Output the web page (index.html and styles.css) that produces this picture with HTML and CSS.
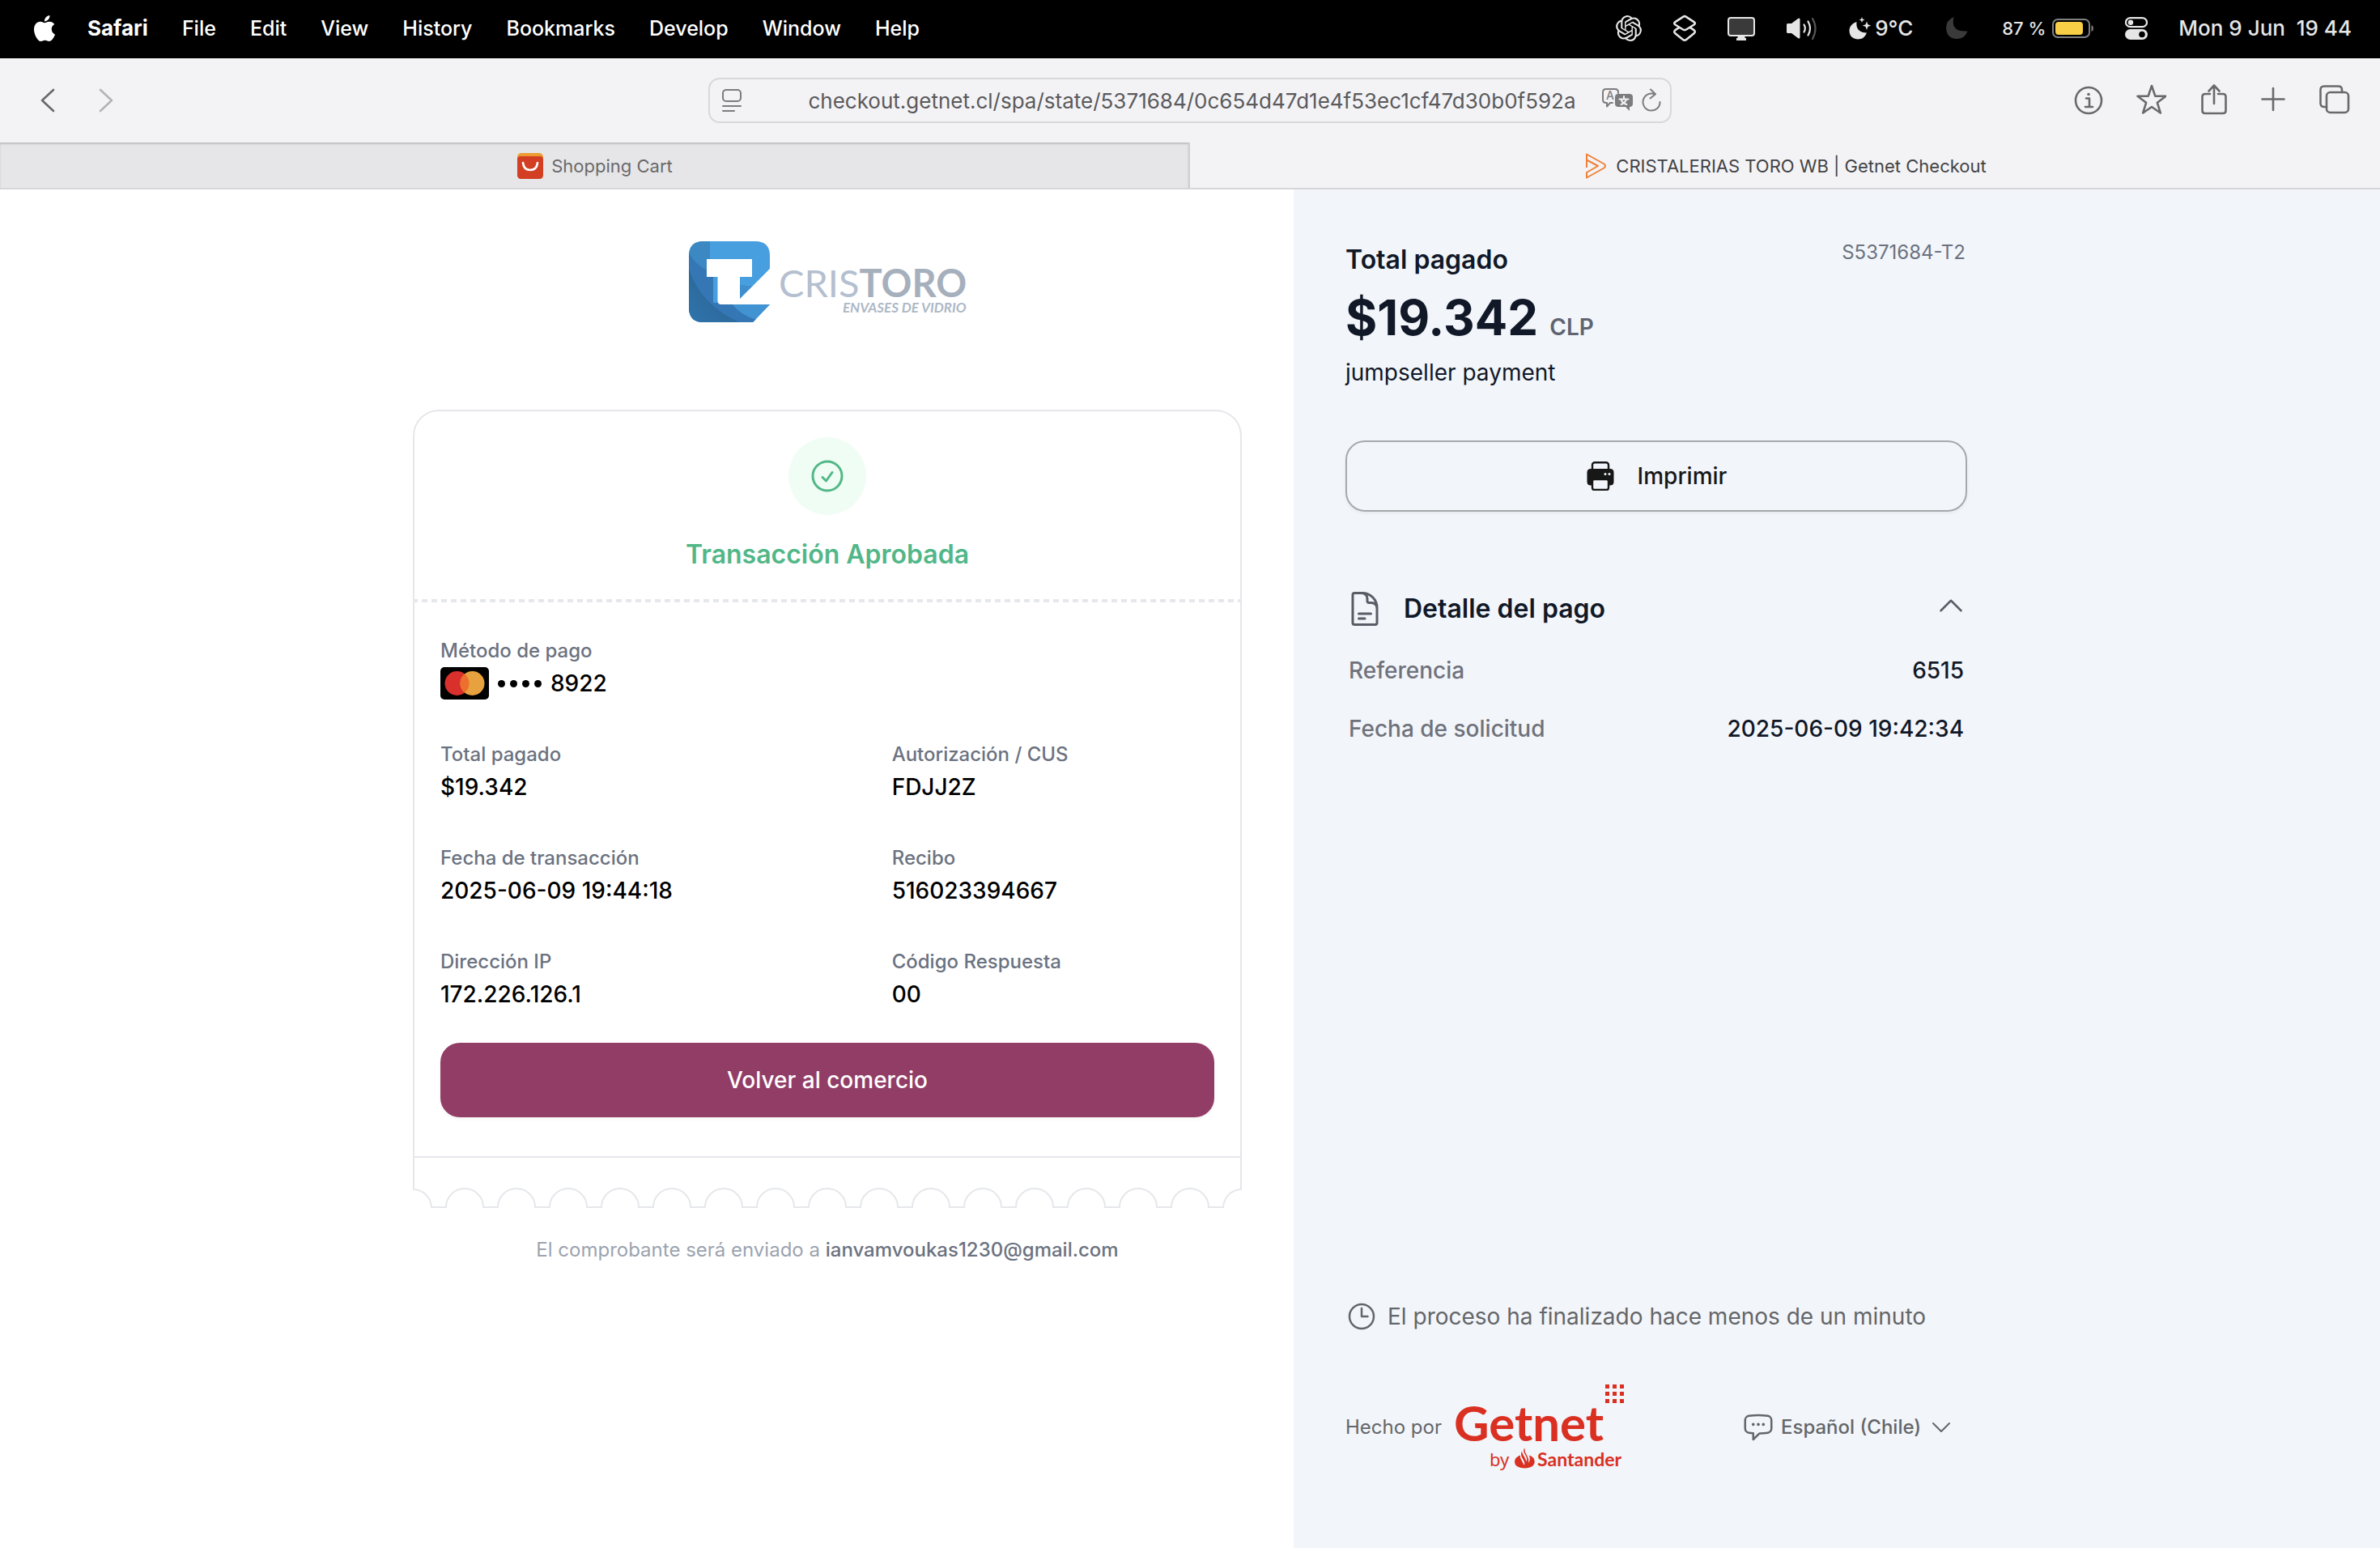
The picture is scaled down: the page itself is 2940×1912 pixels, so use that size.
FILE: index.html
```html
<!DOCTYPE html>
<html lang="es">
<head>
<meta charset="utf-8">
<title>CRISTALERIAS TORO WB | Getnet Checkout</title>
<link rel="stylesheet" href="styles.css">
</head>
<body>
<header class="menubar">
  <nav class="menus" aria-label="Menu bar">
    <button class="menu apple" aria-label="Apple"><svg width="32" height="32" viewBox="0 0 24 24" fill="currentColor"><path d="M12.152 6.896c-.948 0-2.415-1.078-3.96-1.04-2.04.027-3.91 1.183-4.961 3.014-2.117 3.675-.546 9.103 1.519 12.09 1.013 1.454 2.208 3.09 3.792 3.039 1.52-.065 2.09-.987 3.935-.987 1.831 0 2.35.987 3.96.948 1.637-.026 2.676-1.48 3.676-2.948 1.156-1.688 1.636-3.325 1.662-3.415-.039-.013-3.182-1.221-3.22-4.857-.026-3.04 2.48-4.494 2.597-4.559-1.429-2.09-3.623-2.324-4.39-2.376-2-.156-3.675 1.09-4.61 1.09zM15.53 3.83c.843-1.012 1.4-2.427 1.245-3.83-1.207.052-2.662.805-3.532 1.818-.78.896-1.454 2.338-1.273 3.714 1.338.104 2.715-.688 3.559-1.701"/></svg></button>
    <button class="menu app">Safari</button>
    <button class="menu">File</button>
    <button class="menu">Edit</button>
    <button class="menu">View</button>
    <button class="menu">History</button>
    <button class="menu">Bookmarks</button>
    <button class="menu">Develop</button>
    <button class="menu">Window</button>
    <button class="menu">Help</button>
  </nav>
  <div class="status">
    <svg width="32" height="32" viewBox="0 0 24 24" fill="currentColor"><path d="M22.2819 9.8211a5.9847 5.9847 0 0 0-.5157-4.9108 6.0462 6.0462 0 0 0-6.5098-2.9A6.0651 6.0651 0 0 0 4.9807 4.1818a5.9847 5.9847 0 0 0-3.9977 2.9 6.0462 6.0462 0 0 0 .7427 7.0966 5.98 5.98 0 0 0 .511 4.9107 6.051 6.051 0 0 0 6.5146 2.9001A5.9847 5.9847 0 0 0 13.2599 24a6.0557 6.0557 0 0 0 5.7718-4.2058 5.9894 5.9894 0 0 0 3.9977-2.9001 6.0557 6.0557 0 0 0-.7475-7.0729zm-9.022 12.6081a4.4755 4.4755 0 0 1-2.8764-1.0408l.1419-.0804 4.7783-2.7582a.7948.7948 0 0 0 .3927-.6813v-6.7369l2.02 1.1686a.071.071 0 0 1 .038.052v5.5826a4.504 4.504 0 0 1-4.4945 4.4944zm-9.6607-4.1254a4.4708 4.4708 0 0 1-.5346-3.0137l.142.0852 4.783 2.7582a.7712.7712 0 0 0 .7806 0l5.8428-3.3685v2.3324a.0804.0804 0 0 1-.0332.0615L9.74 19.9502a4.4992 4.4992 0 0 1-6.1408-1.6464zM2.3408 7.8956a4.485 4.485 0 0 1 2.3655-1.9728V11.6a.7664.7664 0 0 0 .3879.6765l5.8144 3.3543-2.0201 1.1685a.0757.0757 0 0 1-.071 0l-4.8303-2.7865A4.504 4.504 0 0 1 2.3408 7.872zm16.5963 3.8558L13.1038 8.364 15.1192 7.2a.0757.0757 0 0 1 .071 0l4.8303 2.7913a4.4944 4.4944 0 0 1-.6765 8.1042v-5.6772a.79.79 0 0 0-.407-.667zm2.0107-3.0231l-.142-.0852-4.7735-2.7818a.7759.7759 0 0 0-.7854 0L9.409 9.2297V6.8974a.0662.0662 0 0 1 .0284-.0615l4.8303-2.7866a4.4992 4.4992 0 0 1 6.6802 4.66zM8.3065 12.863l-2.02-1.1638a.0804.0804 0 0 1-.038-.0567V6.0742a4.4992 4.4992 0 0 1 7.3757-3.4537l-.142.0805L8.704 5.459a.7948.7948 0 0 0-.3927.6813zm1.0976-2.3654l2.602-1.4998 2.6069 1.4998v2.9994l-2.5974 1.4997-2.6067-1.4997Z"/></svg>
    <svg width="30" height="34" viewBox="0 0 30 34" fill="none" stroke="currentColor" stroke-width="2.6" stroke-linejoin="round"><path d="M13 2.800q2-1.400 4 0l9.600 6.300q2.400 1.700 0 3.400L17 18.500q-2 1.200-4 0l-9.600-6q-2.400-1.700 0-3.400Z"/><path d="M8.500 15.800 3.400 19.200q-2.400 2 0 4L13 31q2 1.400 4 0l9.600-7.800q2.400-2 0-4l-5.100-3.400"/></svg>
    <svg width="34" height="30" viewBox="0 0 34 30"><rect x="1" y="2" width="32" height="22" rx="3" fill="#3a3a3a" stroke="currentColor" stroke-width="2"/><path d="M12.500 24h9v3h1.500v3h-12v-3h1.500Z" fill="currentColor"/></svg>
    <svg width="40" height="30" viewBox="0 0 40 30" fill="none" stroke="currentColor" stroke-width="2.200" stroke-linecap="round"><path d="M1 10.500q0-1.500 1.500-1.500H7l8-6q2.500-1.500 2.500 1v22q0 2.500-2.500 1l-8-6H2.500Q1 21 1 19.500Z" fill="currentColor" stroke="none"/><path d="M22.500 10.500q2.600 4.500 0 9M27.500 6.500q5 8.500 0 17"/><path d="M33 3q7 12 0 25" stroke="#555"/></svg>
    <span class="weather"><svg width="28" height="30" viewBox="0 0 28 30" fill="currentColor"><path d="M9.500 7Q8 20 22 20.500q-3 8-11 8Q1 28 .500 18 .500 10 9.500 7Z"/><path d="M16 1l.9 2.600 2.600.9-2.600.9L16 8l-.9-2.600-2.600-.9 2.600-.9ZM22 6.500l1.400 3.800 3.900 1.300-3.900 1.300L22 17l-1.400-4.100-3.900-1.300 3.900-1.300Z"/></svg>9°C</span>
    <svg class="focus" width="34" height="30" viewBox="0 0 34 30" fill="currentColor"><path d="M12.500 1Q8 20 29.500 18.500 26 28 16 28 4 27.500 3 15 3 5 12.500 1Z"/></svg>
    <span class="battery">87 %<svg width="52" height="24" viewBox="0 0 52 24"><rect x="1" y="1" width="45" height="22" rx="6" fill="none" stroke="#808080" stroke-width="2"/><rect x="4" y="4" width="34" height="16" rx="4" fill="#f7ce46"/><path d="M48.500 8q2.500 1 2.500 4t-2.500 4Z" fill="#808080"/></svg></span>
    <svg width="28" height="28" viewBox="0 0 28 28"><rect x="1" y="1.200" width="26" height="11" rx="5.500" fill="none" stroke="currentColor" stroke-width="2.200"/><circle cx="7" cy="6.700" r="3.200" fill="currentColor"/><rect y="15" width="28" height="13" rx="6.500" fill="currentColor"/><circle cx="21" cy="21.500" r="3.800" fill="#000"/></svg>
    <span class="clock">Mon 9 Jun&nbsp; 19 44</span>
  </div>
</header>

<div class="toolbar">
  <div class="history">
    <button class="tool" aria-label="Back"><svg width="40" height="40" viewBox="0 0 40 40"><path d="M27 7 13 20l14 13"/></svg></button>
    <button class="tool off" aria-label="Forward"><svg width="40" height="40" viewBox="0 0 40 40"><path d="M13 7l14 13-14 13"/></svg></button>
  </div>
  <div class="address">
    <button class="tool mini" aria-label="Reader"><svg width="24" height="30" viewBox="0 0 24 30"><rect x="1" y="2" width="22" height="14" rx="4"/><path d="M1 22h22M1 28h14"/></svg></button>
    <input class="url" aria-label="Address" value="checkout.getnet.cl/spa/state/5371684/0c654d47d1e4f53ec1cf47d30b0f592a">
    <div class="page-tools">
      <button class="tool mini" aria-label="Translate"><svg width="40" height="30" viewBox="0 0 40 30"><path d="M13 18h-3l-4 4.500V18H5q-4 0-4-4V5q0-4 4-4h11q4 0 4 4v1"/><path class="solid" d="M20 7h14q4 0 4 4v8q0 4-4 4v5l-5-5h-9q-4 0-4-4v-8q0-4 4-4Z"/><text class="glyph-a" x="5" y="14">A</text><path class="knock" d="M27 10v3M21.500 13.500h11M23.500 20q5.500-2 6.500-6.500M24 15q2 4 6.500 5"/></svg></button>
      <button class="tool mini" aria-label="Reload"><svg width="26" height="30" viewBox="0 0 26 30"><path d="M23.500 17A10.500 10.500 0 1 1 17 7.400M12 1.500l6 5.800-6.500 5.200"/></svg></button>
    </div>
  </div>
  <div class="actions">
    <button class="tool" aria-label="Info"><svg width="40" height="40" viewBox="0 0 40 40"><circle cx="20" cy="20" r="16"/><path d="M17 17.500h4V28M16 28h9"/><circle class="solid" cx="20" cy="12.500" r="1.800"/></svg></button>
    <button class="tool" aria-label="Bookmark"><svg width="40" height="40" viewBox="-2 1 40 40"><path d="M20 3l4.300 12.600 13.200.2-10.600 8 3.900 12.700L20 29l-10.800 7.500 3.900-12.700-10.600-8 13.200-.2Z"/></svg></button>
    <button class="tool" aria-label="Share"><svg width="40" height="40" viewBox="-3 1 40 40"><path d="M15 13h-6q-3.500 0-3.500 3.500v17Q5.500 37 9 37h22q3.500 0 3.500-3.500v-17Q34.500 13 31 13h-6M20 25V3M13.500 9.500 20 2.500l6.500 7"/></svg></button>
    <button class="tool" aria-label="New tab"><svg width="40" height="40" viewBox="0 1 40 40"><path d="M20 6v27M6.500 19.500h27"/></svg></button>
    <button class="tool" aria-label="Tab overview"><svg width="40" height="40" viewBox="0 1 40 40"><path d="M10 29H7q-4.500 0-4.500-4.500V8Q2.500 3.500 7 3.500h17.500Q29 3.500 29 8v3"/><rect x="10" y="11" width="27" height="25" rx="4.500"/></svg></button>
  </div>
</div>

<nav class="tabs" aria-label="Tabs">
  <button class="tab"><svg width="32" height="32" viewBox="0 0 32 32"><rect width="32" height="32" rx="5" fill="#ee9c32"/><path d="M0 8q0-4 4-4h24q4 0 4 4v19q0 5-5 5H5q-5 0-5-5Z" fill="#d23f22"/><path d="M7 12q1 9 9 9t9-9" fill="none" stroke="#fff" stroke-width="2.600" stroke-linecap="round"/></svg>Shopping Cart</button>
  <button class="tab current"><svg width="28" height="32" viewBox="0 0 28 32" fill="none" stroke="#f08037" stroke-width="2" stroke-linejoin="round"><path d="M2 18V1.500l21.500 12q3 2.500 0 5L2 30.500V24l14-8L2 8.500"/></svg>CRISTALERIAS TORO WB | Getnet Checkout</button>
</nav>

<main class="checkout">
  <section class="receipt-side">
    <div class="receipt-column">
      <svg class="merchant" width="342" height="100" viewBox="0 0 342 100" role="img" aria-label="Cristoro">
        <defs>
          <clipPath id="badge"><path d="M18 0H82Q100 0 100 18V34L79 57v21h21L79 100H18Q0 100 0 82V18Q0 0 18 0Z"/></clipPath>
          <linearGradient id="deep" x1="0" y1="1" x2="1" y2="0"><stop offset="0" stop-color="#2f74ac"/><stop offset="1" stop-color="#2b5f8c"/></linearGradient>
        </defs>
        <g clip-path="url(#badge)">
          <path fill="#479fdf" d="M0 0h100v100H0Z"/>
          <path fill="#3c88c2" d="M0 0h26v60H0Z"/>
          <path fill="#3f8fce" d="M62 53q10 3 20 2L62 74Z"/>
          <path fill="#4193d2" d="M40 76h60v24H60Z"/>
          <path fill="#3577b4" d="M0 15Q12 34 30 38v38h22q12 16 32 21v3H0Z"/>
          <path fill="url(#deep)" d="M0 34q14 44 62 66H0Z"/>
        </g>
        <path fill="#fff" d="M22 22h56v22H63v27l37-37v44H40q-4.500 0-4.500-4.500V44H22Z"/>
        <text class="brand" x="111" y="69">CRIS<tspan class="brand-bold">TORO</tspan></text>
        <text class="brand-sub" x="190" y="88">ENVASES DE VIDRIO</text>
      </svg>

      <article class="receipt">
        <div class="result">
          <span class="result-badge"><svg class="line-icon" width="48" height="48" viewBox="0 0 24 24"><path d="M9 12.750 11.250 15 15 9.750M21 12a9 9 0 1 1-18 0 9 9 0 0 1 18 0Z"/></svg></span>
          <h1 class="result-title">Transacción Aprobada</h1>
        </div>
        <div class="receipt-body">
          <dl class="facts">
            <div class="fact wide"><dt>Método de pago</dt><dd class="card-number"><svg width="60" height="40" viewBox="0 0 60 40"><rect width="60" height="40" rx="5"/><circle cx="20.500" cy="20" r="15" fill="#d9302c"/><circle cx="39.500" cy="20" r="15" fill="#e8a13f"/><path d="M30 8.400a15 15 0 0 1 0 23.200 15 15 0 0 1 0-23.200Z" fill="#ec6f2d"/></svg><span class="dots"><i></i><i></i><i></i><i></i></span>8922</dd></div>
            <div class="fact"><dt>Total pagado</dt><dd>$19.342</dd></div>
            <div class="fact"><dt>Autorización / CUS</dt><dd>FDJJ2Z</dd></div>
            <div class="fact"><dt>Fecha de transacción</dt><dd>2025-06-09 19:44:18</dd></div>
            <div class="fact"><dt>Recibo</dt><dd>516023394667</dd></div>
            <div class="fact"><dt>Dirección IP</dt><dd>172.226.126.1</dd></div>
            <div class="fact"><dt>Código Respuesta</dt><dd>00</dd></div>
          </dl>
          <button class="return">Volver al comercio</button>
        </div>
      </article>
      <svg class="stub" viewBox="0 0 1024 64" aria-hidden="true"><path d="M0 1h1024M1 0v41a23 23 0 0 1 22 22h18a23 23 0 0 1 46 0h18a23 23 0 0 1 46 0h18a23 23 0 0 1 46 0h18a23 23 0 0 1 46 0h18a23 23 0 0 1 46 0h18a23 23 0 0 1 46 0h18a23 23 0 0 1 46 0h18a23 23 0 0 1 46 0h18a23 23 0 0 1 46 0h18a23 23 0 0 1 46 0h18a23 23 0 0 1 46 0h18a23 23 0 0 1 46 0h18a23 23 0 0 1 46 0h18a23 23 0 0 1 46 0h18a23 23 0 0 1 46 0h18a23 23 0 0 1 22-22V0"/></svg>
      <p class="mail-note">El comprobante será enviado a <strong>ianvamvoukas1230@gmail.com</strong></p>
    </div>
  </section>

  <aside class="summary-side">
    <div class="summary">
      <div class="summary-head">
        <h2 class="heading">Total pagado</h2>
        <span class="session">S5371684-T2</span>
      </div>
      <p class="amount">$19.342 <span class="currency">CLP</span></p>
      <p class="concept">jumpseller payment</p>
      <button class="print"><svg width="36" height="36" viewBox="0 0 36 36"><rect x="8" y="1.200" width="20" height="12" rx="3" fill="none" stroke="#171717" stroke-width="2.400"/><path d="M6 9h24q4.500 0 4.500 4.500V25q0 4.500-4.500 4.500H6Q1.500 29.500 1.500 25V13.500Q1.500 9 6 9Z" fill="#171717"/><rect x="8" y="22" width="20" height="13" rx="2.500" fill="#f2f5fa" stroke="#171717" stroke-width="2.400"/><circle cx="24" cy="15.500" r="1.500" fill="#f2f5fa"/><circle cx="29" cy="15.500" r="1.500" fill="#f2f5fa"/></svg>Imprimir</button>

      <button class="detail-toggle" aria-expanded="true">
        <svg class="line-icon" width="48" height="48" viewBox="0 0 24 24"><path d="M19.500 14.250v-2.625a3.375 3.375 0 0 0-3.375-3.375h-1.500A1.125 1.125 0 0 1 13.500 7.125v-1.500a3.375 3.375 0 0 0-3.375-3.375H8.250m0 12.750h7.500m-7.500 3H12M10.500 2.250H5.625c-.621 0-1.125.504-1.125 1.125v17.250c0 .621.504 1.125 1.125 1.125h12.750c.621 0 1.125-.504 1.125-1.125V11.250a9 9 0 0 0-9-9Z"/></svg>
        <span class="heading">Detalle del pago</span>
        <svg class="line-icon chevron" width="40" height="40" viewBox="0 0 24 24"><path d="m4.500 15.750 7.500-7.500 7.500 7.500"/></svg>
      </button>
      <dl class="detail">
        <div class="detail-row"><dt>Referencia</dt><dd>6515</dd></div>
        <div class="detail-row"><dt>Fecha de solicitud</dt><dd>2025-06-09 19:42:34</dd></div>
      </dl>

      <footer class="foot">
        <p class="elapsed"><svg class="line-icon" width="40" height="40" viewBox="0 0 24 24"><path d="M12 6v6h4.500m4.500 0a9 9 0 1 1-18 0 9 9 0 0 1 18 0Z"/></svg>El proceso ha finalizado hace menos de un minuto</p>
        <div class="made-by">
          <span>Hecho por</span>
          <svg class="getnet" width="208" height="106" viewBox="0 0 208 106" role="img" aria-label="Getnet by Santander">
            <path d="M184 0h5v5h-5ZM193 0h5v5h-5ZM202 0h5v5h-5ZM184 9h5v5h-5ZM193 9h5v5h-5ZM202 9h5v5h-5ZM184 18h5v5h-5ZM193 18h5v5h-5ZM202 18h5v5h-5Z"/>
            <text class="getnet-name" x="-3" y="70">Getnet</text>
            <text class="getnet-by" x="41" y="101">by</text>
            <path d="M84.500 78.500q-.5 4 2 8 3.500 5.500 2.700 10.500l1-2q1.500-3.500-.5-7.500 7 2 7 7.500 0 8-12.500 8.500Q72 103 72 95.500q0-5.500 7-8-.5 3 1.500 6l3.500 6.500q1-3-1-6.500l-2-3.500q-2-4 0-7.500.5 3 2.500 6l3.500 7q1-3.500-1-7l-2-3.500q-2-4 .5-6.500Z"/>
            <text class="getnet-bank" x="100" y="101">Santander</text>
          </svg>
          <label class="language"><svg class="line-icon" width="40" height="40" viewBox="0 0 24 24"><path d="M8.625 9.750a.375.375 0 1 1-.750 0 .375.375 0 0 1 .750 0Zm0 0H8.250m4.125 0a.375.375 0 1 1-.750 0 .375.375 0 0 1 .750 0Zm0 0H12m4.125 0a.375.375 0 1 1-.750 0 .375.375 0 0 1 .750 0Zm0 0h-.375m-13.500 3.010c0 1.600 1.123 2.994 2.707 3.227 1.087.160 2.185.283 3.293.369V21l4.184-4.183a1.140 1.140 0 0 1 .778-.332 48.294 48.294 0 0 0 5.830-.498c1.585-.233 2.708-1.626 2.708-3.228V6.741c0-1.602-1.123-2.995-2.707-3.228A48.394 48.394 0 0 0 12 3c-2.392 0-4.744.175-7.043.513C3.373 3.746 2.250 5.140 2.250 6.741v6.018Z"/></svg><select aria-label="Idioma"><option>Español (Chile)</option></select><svg class="line-icon" width="32" height="32" viewBox="0 0 24 24"><path d="m19.500 8.250-7.500 7.500-7.500-7.500"/></svg></label>
        </div>
      </footer>
    </div>
  </aside>
</main>
</body>
</html>
```
FILE: styles.css
```css
* {
  box-sizing: border-box;
}

body {
  margin: 0;
  min-height: 100vh;
  display: flex;
  flex-direction: column;
  font-family: Inter, "Liberation Sans", sans-serif;
  font-size: 28px;
  line-height: 40px;
  color: #111827;
  background: #fff;
}

h1, h2, p, dl, dd {
  margin: 0;
}

button, input, select {
  margin: 0;
  padding: 0;
  border: 0;
  background: none;
  color: inherit;
  font: inherit;
}

svg {
  display: block;
  flex: none;
}

/* System menu bar */
.menubar {
  display: flex;
  justify-content: space-between;
  align-items: center;
  height: 72px;
  padding: 0 35px 2px 39px;
  background: #000;
  color: #fff;
  font-size: 25px;
  font-weight: 500;
}

.menus {
  display: flex;
  align-items: center;
  gap: 42px;
}

.menu {
  white-space: nowrap;
}

.menu.app {
  font-size: 26px;
  font-weight: 700;
}

.apple {
  margin-right: -5px;
}

.status {
  display: flex;
  align-items: center;
  gap: 38px;
  color: #e6e6e6;
}

.weather, .battery {
  display: flex;
  align-items: center;
  gap: 4px;
}

.weather, .clock {
  font-size: 26px;
}

.battery {
  gap: 8px;
  font-size: 22px;
}

.focus {
  color: #3a3a3a;
}

/* Browser toolbar */
.toolbar {
  display: grid;
  grid-template-columns: 1fr 1190px 1fr;
  align-items: center;
  height: 104px;
  padding: 0 36px;
  background: #f3f3f6;
}

.history, .actions {
  display: flex;
  gap: 32px;
}

.history {
  padding-left: 3px;
}

.actions {
  justify-content: flex-end;
  gap: 36px;
}

.tool {
  color: #69696b;
}

.tool.off {
  color: #b4b4b6;
}

.tool svg {
  fill: none;
  stroke: currentColor;
  stroke-width: 2.6;
  stroke-linecap: round;
  stroke-linejoin: round;
}

.tool.mini {
  color: #7c7c7e;
}

.tool.mini svg {
  stroke-width: 2;
}

.tool .solid {
  fill: currentColor;
  stroke: none;
}

.tool .knock {
  stroke: #f3f3f6;
}

.tool .glyph-a {
  fill: currentColor;
  stroke: none;
  font-size: 14px;
  font-weight: 500;
}

.address {
  display: grid;
  grid-template-columns: 88px 1fr 88px;
  align-items: center;
  height: 56px;
  padding: 0 10px 0 15px;
  border: 2px solid #d8d8da;
  border-radius: 14px;
}

.url {
  width: 100%;
  height: 40px;
  padding-top: 2px;
  font-size: 26px;
  text-align: center;
  color: #5a5a5c;
}

.page-tools {
  display: flex;
  justify-content: flex-end;
  gap: 8px;
}

.tabs {
  display: grid;
  grid-template-columns: 1fr 1fr;
  height: 58px;
  border-bottom: 2px solid #d5d6d9;
  background: #f3f3f6;
}

.tab {
  display: flex;
  justify-content: center;
  align-items: center;
  gap: 10px;
  padding: 2px 0 0 2px;
  border-right: 2px solid #cfcfd1;
  background: #e6e6e8;
  box-shadow: inset 0 2px 2px #bfbfc1;
  color: #69696b;
  font-size: 22px;
}

.tab.current {
  border: 0;
  background: none;
  box-shadow: none;
  color: #434345;
}

/* Checkout page */
.checkout {
  flex: 1;
  display: grid;
  grid-template-columns: calc(50% + 128px) 1fr;
}

.receipt-side {
  display: flex;
  justify-content: flex-end;
  padding: 64px 64px 64px 0;
}

.receipt-column {
  flex: 0 1 1024px;
}

.merchant {
  margin: 0 auto 108px;
  overflow: visible;
}

.brand, .brand-sub {
  font-family: Lato, sans-serif;
  font-size: 47px;
  fill: #b4bfd0;
}

.brand-bold {
  font-weight: 700;
  fill: #a6b0bd;
}

.brand-sub {
  font-size: 17px;
  font-weight: 700;
  font-style: italic;
  fill: #adb8c6;
}

.receipt {
  border: 2px solid #e5e7eb;
  border-bottom: 0;
  border-radius: 32px 32px 0 0;
}

.result {
  display: flex;
  flex-direction: column;
  align-items: center;
  gap: 24px;
  padding: 32px 32px 30px;
  color: #52b788;
}

.result-badge {
  padding: 24px;
  border-radius: 50%;
  background: #f0fdf4;
}

.result-title {
  font-size: 32px;
  line-height: 50px;
  font-weight: 600;
}

.line-icon {
  fill: none;
  stroke: currentColor;
  stroke-width: 1.5;
  stroke-linecap: round;
  stroke-linejoin: round;
}

.receipt-body {
  padding: 44px 32px 48px;
  background: linear-gradient(90deg, #e5e7eb 4px, transparent 4px 9px, #e5e7eb 9px) top left / 12px 4px round no-repeat;
}

.facts {
  display: grid;
  grid-template-columns: 7fr 5fr;
  row-gap: 48px;
  margin-bottom: 40px;
}

.fact.wide {
  grid-column: 1 / -1;
}

.fact dt {
  font-size: 24px;
  font-weight: 500;
  color: #6b7280;
}

.fact dd {
  font-weight: 500;
  color: #000;
}

.card-number {
  display: flex;
  align-items: center;
  gap: 11px;
}

.dots {
  display: flex;
  gap: 6px;
}

.dots i {
  width: 9px;
  height: 9px;
  border-radius: 50%;
  background: #000;
}

.return {
  width: 100%;
  height: 92px;
  border-radius: 24px;
  background: #923d66;
  box-shadow: 0 2px 4px rgba(0, 0, 0, 0.05);
  color: #fff;
  font-weight: 500;
}

.stub {
  width: 100%;
  fill: none;
  stroke: #e5e7eb;
  stroke-width: 2;
}

.mail-note {
  margin-top: 32px;
  text-align: center;
  font-size: 24px;
  color: #9ca3af;
}

.mail-note strong {
  font-weight: 500;
  color: #6b7280;
}

.summary-side {
  display: flex;
  padding: 64px 64px 96px;
  background: #f2f5fa;
}

.summary {
  flex: 0 1 768px;
  display: flex;
  flex-direction: column;
}

.summary-head {
  display: flex;
  justify-content: space-between;
  margin-bottom: 10px;
}

.heading {
  font-size: 32px;
  line-height: 46px;
  font-weight: 600;
}

.session {
  padding-right: 2px;
  font-size: 24px;
  line-height: 28px;
  color: #6b7280;
}

.amount {
  font-size: 60px;
  line-height: 76px;
  font-weight: 700;
}

.currency {
  font-size: 28px;
  line-height: 28px;
  font-weight: 600;
  color: #5f6470;
}

.concept {
  margin: 10px 0 64px;
}

.print {
  display: flex;
  justify-content: center;
  align-items: center;
  gap: 28px;
  height: 88px;
  border: 2px solid #a6a8ab;
  border-radius: 24px;
  box-shadow: 0 2px 4px rgba(0, 0, 0, 0.05);
  color: #171717;
  font-weight: 500;
}

.detail-toggle {
  display: flex;
  align-items: center;
  gap: 24px;
  margin: 96px 0 32px;
  text-align: left;
}

.detail-toggle .line-icon {
  color: #5a5d66;
}

.chevron {
  align-self: flex-start;
  margin-left: auto;
}

.detail {
  display: grid;
  row-gap: 32px;
  padding: 0 4px;
}

.detail-row {
  display: flex;
  justify-content: space-between;
  font-weight: 500;
}

.detail-row dt {
  color: #6f727b;
}

.foot {
  margin-top: auto;
  color: #646669;
}

.elapsed {
  display: flex;
  align-items: center;
  gap: 12px;
  margin-bottom: 64px;
}

.made-by {
  display: flex;
  align-items: center;
  gap: 18px;
  padding-right: 16px;
  font-size: 24px;
}

.getnet {
  fill: #d93022;
  overflow: visible;
}

.getnet text {
  font-family: Lato, "Noto Sans", sans-serif;
}

.getnet-name {
  font-size: 60px;
  font-weight: 700;
}

.getnet .getnet-by {
  font-family: "Noto Sans", sans-serif;
  font-size: 22px;
}

.getnet-bank {
  font-size: 23px;
  font-weight: 700;
}

.language {
  display: flex;
  align-items: center;
  gap: 8px;
  margin-left: auto;
}

.language select {
  appearance: none;
  font-weight: 500;
}
```
